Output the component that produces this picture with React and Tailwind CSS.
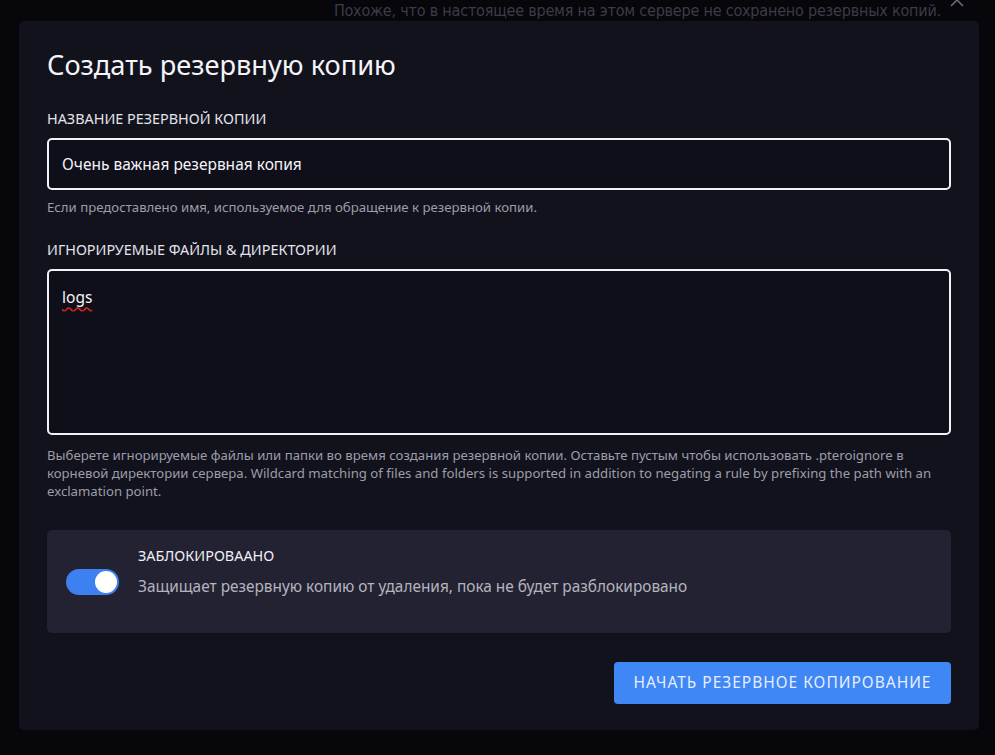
import React, { useState } from "react";

export default function App() {
  const [locked, setLocked] = useState(true);
  const [name, setName] = useState("Очень важная резервная копия");
  const [ignored, setIgnored] = useState("logs");

  return (
    <div
      className="relative w-[995px] h-[755px] overflow-hidden bg-[#06060b]"
      style={{ fontFamily: '"Noto Sans", "Open Sans", sans-serif' }}
    >
      {/* Background page behind the overlay */}
      <div className="absolute top-[1px] right-[54px] text-[16px] leading-5 text-[#3c3c47] tracking-[-0.2px]"
        style={{ fontFamily: '"DejaVu Sans Condensed", "Liberation Sans Narrow", "Noto Sans", sans-serif' }}>
        Похоже, что в настоящее время на этом сервере не сохранено резервных копий.
      </div>
      <svg className="absolute top-[-8px] right-[30px] w-[16px] h-[16px]" viewBox="0 0 16 16" fill="none" stroke="#6b6b78" strokeWidth="1.6">
        <path d="M2 2l12 12M14 2L2 14" />
      </svg>

      {/* Modal */}
      <div className="absolute left-[19px] top-[21px] w-[960px] h-[709px] rounded-[5px] bg-[#12121d] px-[28px] pt-[25px]">
        <h2 className="text-[27.2px] leading-[38px] text-[#f4f4f8] font-normal mb-[25px]">Создать резервную копию</h2>

        <label className="block text-[14.4px] leading-5 text-[#e4e4ec] uppercase mb-[9px]">Название резервной копии</label>
        <input
          value={name}
          onChange={(e) => setName(e.target.value)}
          className="block w-full h-[52px] rounded-[5px] border-2 border-[#f2f2f6] bg-[#0f0f19] px-[13px] text-[15.5px] text-[#f4f4f8] outline-none"
        />
        <p className="mt-[8px] text-[13.2px] leading-[18px] text-[#9d9da8]">
          Если предоставлено имя, используемое для обращение к резервной копии.
        </p>

        <label className="block mt-[24px] text-[14.4px] leading-5 text-[#e4e4ec] uppercase mb-[9px]">Игнорируемые файлы &amp; директории</label>
        <textarea
          value={ignored}
          onChange={(e) => setIgnored(e.target.value)}
          spellCheck={true}
          className="block w-full h-[166px] resize-none rounded-[5px] border-2 border-[#f2f2f6] bg-[#0f0f19] px-[13px] pt-[16px] text-[15.5px] leading-5 text-[#f4f4f8] outline-none underline decoration-wavy decoration-[#e02020] underline-offset-[3px]"
        />
        <p className="mt-[11px] text-[13.2px] leading-[18px] text-[#9d9da8] pr-[15px]">
          Выберете игнорируемые файлы или папки во время создания резервной копии. Оставьте пустым чтобы использовать .pteroignore в корневой директории сервера. Wildcard matching of files and folders is supported in addition to negating a rule by prefixing the path with an exclamation point.
        </p>

        <div className="mt-[30px] h-[103px] rounded-[5px] bg-[#222232] flex items-center pl-[19px]">
          <button
            onClick={() => setLocked(!locked)}
            className={`relative w-[53px] h-[26px] rounded-full shrink-0 ${locked ? "bg-[#3d80f0]" : "bg-[#4b4b5c]"}`}
          >
            <span className={`absolute top-[2px] w-[22px] h-[22px] rounded-full bg-white ${locked ? "right-[2px]" : "left-[2px]"}`} />
          </button>
          <div className="ml-[19px] -mt-[20px]">
            <div className="text-[14.4px] leading-5 text-[#f0f0f5] uppercase">Заблокироваано</div>
            <div className="mt-[11px] text-[15.4px] leading-5 text-[#b4b4be]">Защищает резервную копию от удаления, пока не будет разблокировано</div>
          </div>
        </div>

        <div className="flex justify-end mt-[29px]">
          <button className="h-[42px] w-[337px] rounded-[4px] bg-[#3f87f5] text-[15.5px] text-[#e6eeff] uppercase tracking-[1px]">
            Начать резервное копирование
          </button>
        </div>
      </div>
    </div>
  );
}
